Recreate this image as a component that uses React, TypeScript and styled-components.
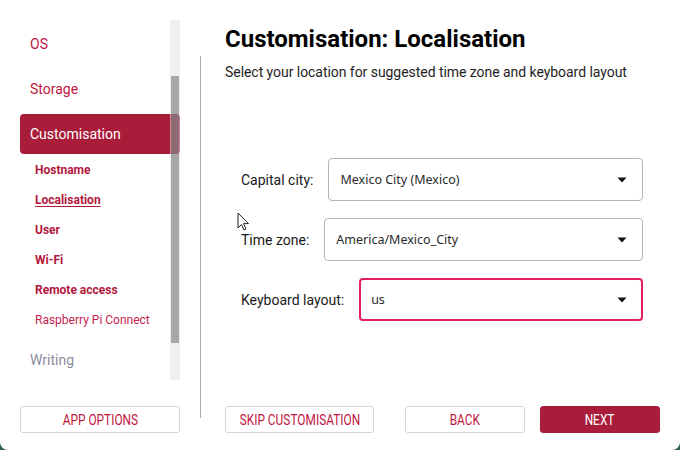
import React from "react";
import styled, { createGlobalStyle } from "styled-components";

const RED = "#a91d3a";
const TEXT_RED = "#c0173f";

const Global = createGlobalStyle`
  html, body { margin: 0; padding: 0; background: #2f5e55; }
  #root { width: 680px; height: 450px; }
  * { box-sizing: border-box; }
`;

const Window = styled.div`
  position: relative;
  width: 680px;
  height: 450px;
  background: #ffffff;
  border-radius: 0 0 8px 8px;
  display: flex;
  flex-direction: column;
  padding: 20px 20px 17px 20px;
  font-family: Roboto, "Liberation Sans", sans-serif;
`;

const Main = styled.div`
  flex: 1;
  display: flex;
  min-height: 0;
`;

const Sidebar = styled.nav`
  position: relative;
  width: 160px;
  height: 360px;
  overflow: hidden;
  padding-top: 4px;
  display: flex;
  flex-direction: column;
  flex-shrink: 0;
`;

const NavItem = styled.div<{ $active?: boolean; $muted?: boolean }>`
  flex-shrink: 0;
  height: 40px;
  margin-bottom: ${(p) => (p.$active ? "0" : "5px")};
  display: flex;
  align-items: center;
  padding-left: 10px;
  border-radius: 4px;
  font-size: 14px;
  color: ${(p) => (p.$active ? "#ffffff" : p.$muted ? "#8b8b99" : TEXT_RED)};
  background: ${(p) => (p.$active ? RED : "transparent")};
`;

const SubList = styled.div`
  flex-shrink: 0;
  display: flex;
  flex-direction: column;
  margin: 1px 0 5px 0;
`;

const SubItem = styled.div<{ $bold?: boolean; $current?: boolean }>`
  flex-shrink: 0;
  height: 30px;
  display: flex;
  align-items: center;
  padding-left: 15px;
  font-size: 12px;
  font-weight: ${(p) => (p.$bold ? 700 : 400)};
  color: ${(p) => (p.$bold ? "#b3173c" : "#c4244d")};
  text-decoration: ${(p) => (p.$current ? "underline" : "none")};
  text-underline-offset: 2px;
`;

const Track = styled.div`
  position: absolute;
  top: 0;
  right: 0;
  width: 10px;
  height: 360px;
  background: rgba(225, 225, 225, 0.55);
`;

const Thumb = styled.div`
  position: absolute;
  top: 56px;
  right: 1px;
  width: 8px;
  height: 267px;
  background: rgba(60, 60, 60, 0.4);
`;

const Divider = styled.div`
  width: 1px;
  background: #a8a8a8;
  margin: 36px 24px -12px 20px;
  align-self: stretch;
`;

const Content = styled.section`
  flex: 1;
  display: flex;
  flex-direction: column;
`;

const Title = styled.h1`
  margin: 5px 0 0 0;
  font-size: 24px;
  line-height: 28px;
  font-weight: 700;
  color: #000;
`;

const Subtitle = styled.p`
  margin: 9px 0 0 0;
  font-size: 14px;
  line-height: 20px;
  color: #1e1e1e;
  letter-spacing: -0.05px;
`;

const Form = styled.div`
  margin-top: 76px;
  padding: 0 17px 0 16px;
  display: flex;
  flex-direction: column;
  gap: 17px;
`;

const Row = styled.div`
  display: flex;
  align-items: center;
  gap: 15px;
`;

const Label = styled.span`
  font-size: 14px;
  color: #1a1a1a;
  white-space: nowrap;
`;

const Combo = styled.div<{ $focused?: boolean }>`
  flex: 1;
  height: 43px;
  border: ${(p) => (p.$focused ? `2px solid #e0215a` : "1px solid #b4b4b4")};
  border-radius: 4px;
  display: flex;
  align-items: center;
  justify-content: space-between;
  padding: 0 ${(p) => (p.$focused ? 14 : 15)}px 0 ${(p) => (p.$focused ? 10 : 11)}px;
  font-family: "Noto Sans", "Open Sans", sans-serif;
  font-size: 12.5px;
  color: #2a2a2a;
`;

const Footer = styled.div`
  display: flex;
  align-items: center;
  height: 27px;
`;

const Button = styled.button<{ $w: number; $primary?: boolean }>`
  width: ${(p) => p.$w}px;
  height: 27px;
  border: 1px solid ${(p) => (p.$primary ? RED : "#d6d6d6")};
  border-radius: 3px;
  background: ${(p) => (p.$primary ? RED : "#fff")};
  color: ${(p) => (p.$primary ? "#fff" : TEXT_RED)};
  font-family: Roboto, "Liberation Sans", sans-serif;
  font-size: 14px;
  padding: 0;
  white-space: nowrap;
`;

const ButtonText = styled.span`
  display: inline-block;
  transform: scaleX(0.85);
`;

const Spacer = styled.div<{ $w: number }>`
  width: ${(p) => p.$w}px;
`;

const Cursor = styled.svg`
  position: absolute;
  left: 237px;
  top: 212px;
`;

const Arrow = () => (
  <svg width="10" height="6" viewBox="0 0 10 6">
    <path d="M0.5 0.5 L9.5 0.5 L5 5.5 Z" fill="#111" />
  </svg>
);

export default function App() {
  return (
    <>
      <Global />
      <Window>
        <Main>
          <Sidebar>
            <NavItem>OS</NavItem>
            <NavItem>Storage</NavItem>
            <NavItem $active>Customisation</NavItem>
            <SubList>
              <SubItem $bold>Hostname</SubItem>
              <SubItem $bold $current>Localisation</SubItem>
              <SubItem $bold>User</SubItem>
              <SubItem $bold>Wi-Fi</SubItem>
              <SubItem $bold>Remote access</SubItem>
              <SubItem>Raspberry Pi Connect</SubItem>
            </SubList>
            <NavItem $muted>Writing</NavItem>
            <Track>
              <Thumb />
            </Track>
          </Sidebar>
          <Divider />
          <Content>
            <Title>Customisation: Localisation</Title>
            <Subtitle>Select your location for suggested time zone and keyboard layout</Subtitle>
            <Form>
              <Row>
                <Label>Capital city:</Label>
                <Combo>
                  <span>Mexico City (Mexico)</span>
                  <Arrow />
                </Combo>
              </Row>
              <Row>
                <Label>Time zone:</Label>
                <Combo>
                  <span>America/Mexico_City</span>
                  <Arrow />
                </Combo>
              </Row>
              <Row>
                <Label>Keyboard layout:</Label>
                <Combo $focused>
                  <span>us</span>
                  <Arrow />
                </Combo>
              </Row>
            </Form>
          </Content>
        </Main>
        <Footer>
          <Button $w={160}><ButtonText>APP OPTIONS</ButtonText></Button>
          <Spacer $w={45} />
          <Button $w={149}><ButtonText>SKIP CUSTOMISATION</ButtonText></Button>
          <Spacer $w={31} />
          <Button $w={120}><ButtonText>BACK</ButtonText></Button>
          <Spacer $w={15} />
          <Button $w={120} $primary><ButtonText>NEXT</ButtonText></Button>
        </Footer>
        <Cursor width="13" height="20" viewBox="0 0 13 20">
          <path d="M1 1 L1 16 L4.5 12.5 L7 18 L9 17 L6.6 11.6 L11.5 11.6 Z" fill="#fff" stroke="#222" strokeWidth="1" strokeLinejoin="round" />
        </Cursor>
      </Window>
    </>
  );
}
